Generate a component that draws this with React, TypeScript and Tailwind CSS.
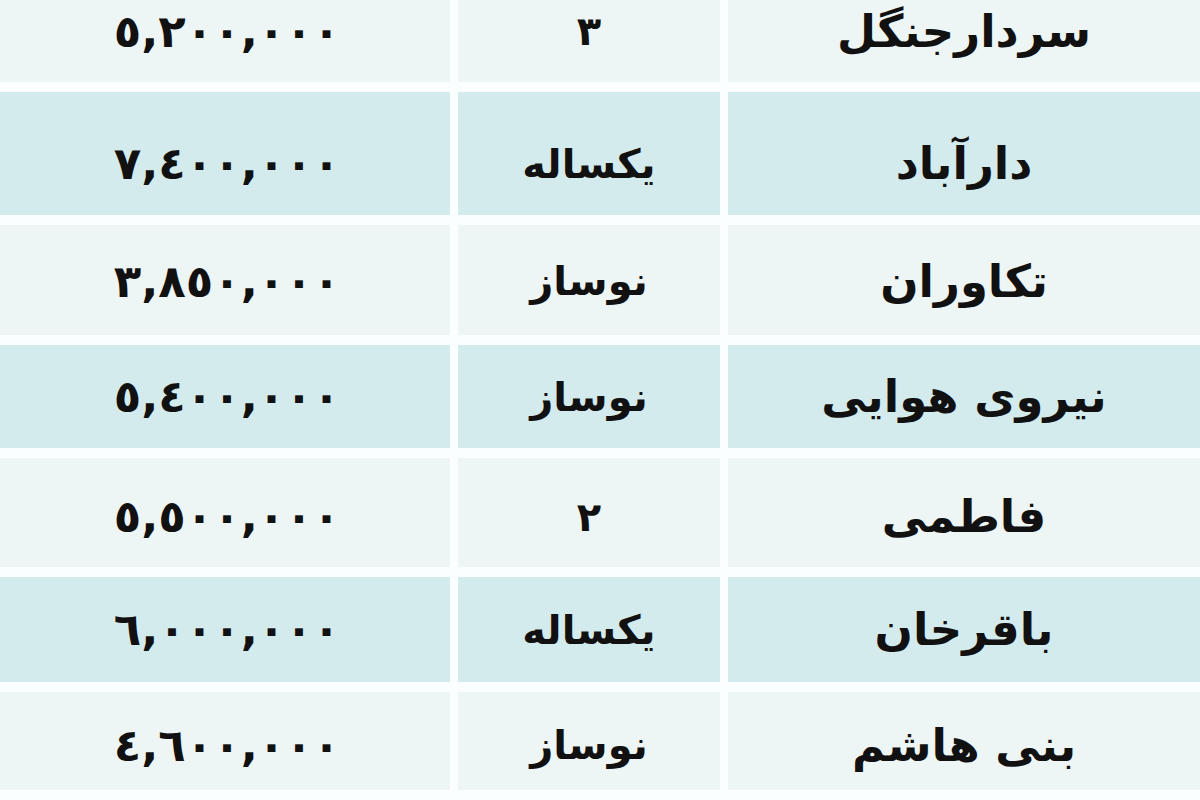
import React from "react";

type Row = { price: string; age: string; area: string; h: string; blue: boolean; pad: string };

const rows: Row[] = [
  { price: "٥,٢٠٠,٠٠٠", age: "۳", area: "سردارجنگل", h: "h-[82px]", blue: false, pad: "pb-[20px]" },
  { price: "٧,٤٠٠,٠٠٠", age: "یکساله", area: "دارآباد", h: "h-[123px]", blue: true, pad: "pt-[20px]" },
  { price: "٣,٨٥٠,٠٠٠", age: "نوساز", area: "تکاوران", h: "h-[110px]", blue: false, pad: "pt-[2px]" },
  { price: "٥,٤٠٠,٠٠٠", age: "نوساز", area: "نیروی هوایی", h: "h-[103px]", blue: true, pad: "" },
  { price: "٥,٥٠٠,٠٠٠", age: "۲", area: "فاطمی", h: "h-[109px]", blue: false, pad: "pt-[8px]" },
  { price: "٦,٠٠٠,٠٠٠", age: "یکساله", area: "باقرخان", h: "h-[105px]", blue: true, pad: "" },
  { price: "٤,٦٠٠,٠٠٠", age: "نوساز", area: "بنی هاشم", h: "h-[98px]", blue: false, pad: "pt-[8px]" },
];

export default function App() {
  return (
    <div
      className="w-[1200px] h-[800px] bg-[#fbfefe] overflow-hidden flex flex-col gap-[10px]"
      style={{ fontFamily: '"DejaVu Sans", sans-serif' }}
    >
      {rows.map((r, i) => {
        const bg = r.blue ? "bg-[#d4ebee]" : "bg-[#eef5f5]";
        return (
          <div key={i} className={`grid grid-cols-[450px_262px_472px] gap-x-2 ${r.h}`}>
            <div className={`${bg} ${r.pad} flex items-center justify-center`}>
              <span className="text-[45px] font-bold text-[#111] tracking-[15px] pl-[4px] leading-none" dir="rtl">
                {r.price}
              </span>
            </div>
            <div className={`${bg} ${r.pad} flex items-center justify-center`}>
              <span className="text-[40px] font-bold text-[#111] leading-none" dir="rtl">
                {r.age}
              </span>
            </div>
            <div className={`${bg} ${r.pad} flex items-center justify-center`}>
              <span className="text-[45px] font-bold text-[#111] leading-none" dir="rtl">
                {r.area}
              </span>
            </div>
          </div>
        );
      })}
    </div>
  );
}
